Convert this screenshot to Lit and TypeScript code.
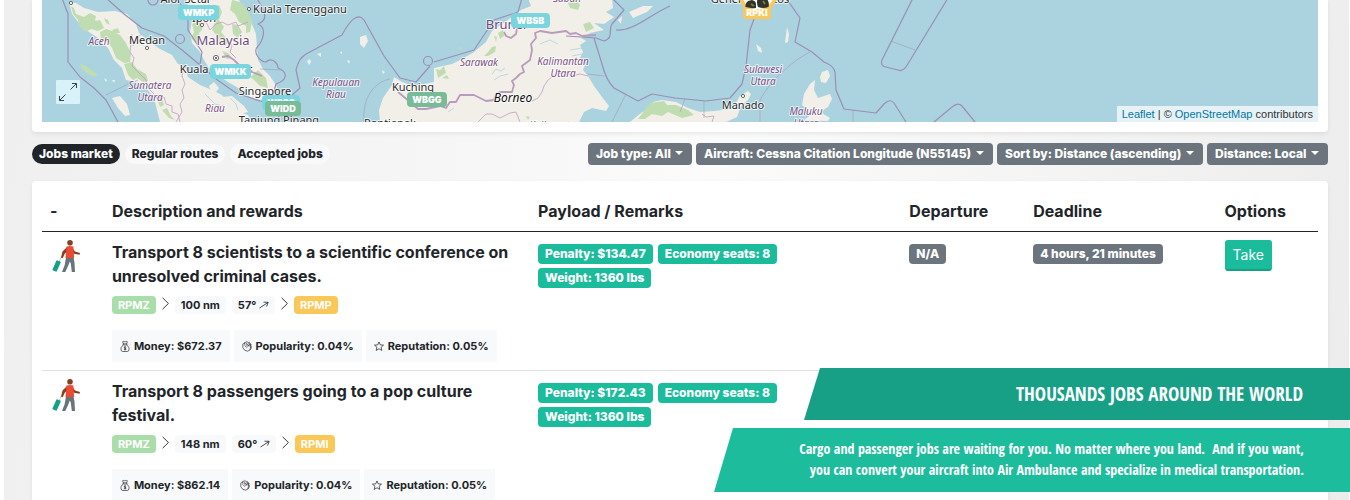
import { LitElement, html, css, svg, nothing } from "lit";
import { customElement, property } from "lit/decorators.js";

interface Job {
  title: string;
  from: string;
  distance: string;
  heading: string;
  to: string;
  money: string;
  popularity: string;
  reputation: string;
  payload: string[];
  departure?: string;
  deadline?: string;
}

const JOBS: Job[] = [
  {
    title: "Transport 8 scientists to a scientific conference on unresolved criminal cases.",
    from: "RPMZ", distance: "100 nm", heading: "57°", to: "RPMP",
    money: "$672.37", popularity: "0.04%", reputation: "0.05%",
    payload: ["Penalty: $134.47", "Economy seats: 8", "Weight: 1360 lbs"],
    departure: "N/A", deadline: "4 hours, 21 minutes",
  },
  {
    title: "Transport 8 passengers going to a pop culture festival.",
    from: "RPMZ", distance: "148 nm", heading: "60°", to: "RPMI",
    money: "$862.14", popularity: "0.04%", reputation: "0.05%",
    payload: ["Penalty: $172.43", "Economy seats: 8", "Weight: 1360 lbs"],
  },
];

const FILTERS = [
  { name: "Job type", value: "All" },
  { name: "Aircraft", value: "Cessna Citation Longitude (N55145)" },
  { name: "Sort by", value: "Distance (ascending)" },
  { name: "Distance", value: "Local" },
];

const TABS = ["Jobs market", "Regular routes", "Accepted jobs"];

const LAND = [
  "M69 2L72 14 78 22 86 30 98 38 108 48 114 60 122 68 126 80 137 82 147 89 154 98 157 110 160 122H252L248 115 240 112 230 106 222 95 212 90 200 85 188 77 185 67 178 64 172 55 160 49 150 42 139 33 136 24 127 14 115 11 98 12 84 8 76 3Z",
  "M186 -2L189 10 192 20 190 32 192 43 200 52 204 60 209 68 218 75 228 82 240 89 250 97 260 100 274 96 277 87 270 76 263 69 258 60 257 48 256 34 251 22 244 10 238 -2Z",
  "M380 122L379 110 383 98 392 85 394 77 402 82 414 86 424 84 434 82 434 68 452 64 464 58 474 52 486 42 492 31 502 24 512 17 521 10 531 6 528 -2 612 -2 613 8 606 12 614 17 604 24 594 23 604 30 590 33 581 38 586 41 580 45 583 52 580 58 585 65 583 70 588 76 594 86 602 97 609 106 606 111 592 108 584 112 579 122Z",
  "M630 122L641 113 650 108 653 102 662 100 676 102 688 108 700 112 714 111 732 109 737 101 740 96 748 91 751 94 748 100 741 106 737 117 726 122Z",
  "M802 105L804 94 810 84 815 80 814 90 818 98 830 94 832 99 828 107 820 112 830 118 828 121 804 120 812 114Z",
  "M820 77L822 72 828 70 830 76 826 83 821 82Z",
  "M112 98L120 96 127 104 130 115 125 116 118 108Z",
  "M209 86L214 82 219 88 216 92 211 91Z",
  "M222 97L232 96 244 106 248 112 240 114 230 106Z",
  "M360 37L366 35 368 41 364 48 360 44Z",
  "M787 27L789 34 788 42 785 43 786 35Z",
  "M756 44L761 48 762 53 758 51Z",
];

const FOREST = [
  "M71 6L74 8 76 14 84 17 90 13 96 16 95 21 100 20 104 28 98 31 91 29 86 32 79 26 78 20 73 14Z",
  "M100 32L106 29 112 31 120 35 126 43 131 54 130 62 124 63 116 58 112 48 108 42 101 40Z",
  "M124 64L132 62 137 69 146 74 148 81 143 82 137 78 133 80 128 75Z",
  "M112 30L118 28 120 33 114 33ZM104 18l4 2 2 5-4-2z",
  "M192 24L198 20 203 24 202 30 199 33 200 39 196 43 191 38 194 32Z",
  "M214 8L219 5 222 12 219 20 224 27 221 32 228 40 226 46 220 45 217 36 212 30 215 22Z",
  "M232 0L240 2 246 8 250 16 252 22 250 32 246 33 246 26 239 22 235 14 230 10Z",
  "M232 24L238 25 242 32 238 38 233 34ZM222 51l6 2 4 5-5 1z",
  "M246 74L252 76 258 70 266 78 268 88 260 86 254 80Z",
  "M156 96L162 98 164 105 160 107ZM162 110l5-2 4 8 4 4-6-2z",
  "M436 69L440 70 444 66 446 73 438 78ZM442 78l5-3 2 4z",
  "M484 56L488 52 492 47 496 46 495 52 488 56Z",
  "M498 33l5-3 1 6-4 3z M494 36l3 1-1 5z",
  "M568 3L576 0 580 5 578 10 570 8Z",
  "M583 24L590 22 594 28 586 32Z",
  "M650 103L664 101 667 105 676 105 688 110 694 115 682 118 668 112 662 116 652 114 645 119 638 119Z",
  "M526 116l4 1-2 3zM458 47l4 1-2 2z",
  "M80 64L86 66 97 74 96 77 88 74 82 69Z",
];

const BORDERS = [
  "M62 -2L68 14V62L80 77 94 88 106 100 118 122",
  "M106 -2L124 14 142 28 164 36 182 50 200 65 216 79 236 93 260 101 276 104 288 116 306 122",
  "M176 -2L188 14V30L202 52 200 64",
  "M258 0C266 14 268 20 258 24C268 28 262 42 258 46C252 52 260 62 266 62C272 56 278 64 278 68C288 72 288 80 276 84L272 98",
  "M278 120L282 104 300 88 296 70C298 62 300 58 306 54L342 35C350 20 358 12 364 20L384 56 400 78 416 82 430 66",
  "M434 62L474 50 494 20 518 12 522 -2",
  "M612 -2L624 10 612 24C608 30 614 38 604 41L596 38 566 36",
  "M594 38L602 64Q606 80 614 88L638 101 652 94 675 98 706 101 730 98 742 84 746 66 750 30 758 8 764 -2",
  "M616 30C632 32 648 16 670 6",
  "M786 -2L800 18 795 42 812 52 824 62Q834 66 835 72L836 90 844 109 876 113 884 104Q890 98 894 103L906 122",
  "M913 -2L882 60Q880 66 886 67L898 70Q902 72 906 67L948 -2",
  "M934 122L952 107Q958 102 962 106L975 122",
];

const THIN = [
  "M106 95L128 84 138 80",
  "M364 122C362 98 374 82 390 79",
  "M604 76L588 74",
  "M626 94L612 122",
  "M891 41L915 50",
  "M810 52C790 62 768 84 760 100V122",
  "M853 110V122 M704 101V118 M685 99L680 112",
  "M260 69L282 70",
];

const INNER = [
  "M132 34L130 52 134 58 132 66 140 74 146 80 148 88 154 94 156 98 164 97 166 104 172 106 172 112 178 114 180 122",
  "M176 122L182 112 180 104 184 98 182 90 185 84 182 76 184 66",
  "M202 24L206 22 210 30 216 24 222 22 228 25 236 22 238 26 248 22",
  "M478 122L486 114 492 114 500 118 510 113 516 112 520 122",
  "M532 101L538 98 542 92 544 86 548 80 556 74 566 72 572 76 580 74 588 76",
  "M702 114L706 117 714 116 712 122",
  "M228 40L232 46 230 52 236 58 M142 34l-6 4-3 8",
];

const COUNTRY = [
  "M398 92L410 102 418 109 426 109 440 106 446 108 450 102 456 102 460 95 474 95 486 101 494 100 496 94 500 92 512 92 514 85 512 81 516 78 520 74 524 72 522 66 530 60 532 50 531 44 536 38 535 33 540 31 552 33 566 31 570 34 576 33 582 36 596 35",
  "M504 32L506 36 511 38 516 34 517 28",
  "M222 57L228 56 234 60 240 66 246 66 252 72 262 76",
];

@customElement("world-map")
class WorldMap extends LitElement {
  static styles = css`
    :host { display: block; position: relative; overflow: hidden; background: #aad3df; }
    .terrain { display: block; width: 100%; height: 122px; }
    .land { fill: #f2efe9; }
    .forest { fill: #c0ddb2; }
    .border { fill: none; stroke: #9b8fb4; stroke-width: 1.2; stroke-linejoin: round; }
    .thin { fill: none; stroke: #9f9bb8; stroke-width: 0.6; }
    .inner { fill: none; stroke: #bfa0c2; stroke-width: 0.8; stroke-linejoin: round; }
    .country { fill: none; stroke: #b79cbc; stroke-width: 1.8; stroke-linejoin: round; }
    .river { fill: none; stroke: #aad3df; stroke-width: 0.8; }
    .dot { fill: #fff; stroke: #444; stroke-width: 0.8; }
    text { font-family: "Noto Sans", sans-serif; paint-order: stroke; stroke: rgba(255, 255, 255, 0.7); stroke-width: 2px; stroke-linejoin: round; text-anchor: middle; }
    .city { font-size: 11px; fill: #2b2b2b; }
    .nation { font-size: 13px; fill: #6f4a78; }
    .region { font-size: 10px; font-style: italic; fill: #7a5284; }
    .island { font-size: 12px; font-style: italic; fill: #111; }
    .code { font-family: Inter, sans-serif; font-size: 9px; font-weight: 900; fill: #fff; stroke: none; }
    .fullscreen { position: absolute; left: 14px; bottom: 18px; width: 24px; height: 24px; padding: 0; border: 0; border-radius: 1px; background: rgba(224, 247, 255, 0.85); cursor: pointer; }
    .fullscreen svg { display: block; }
    .credit { position: absolute; right: 0; bottom: 0; padding: 0 5px; font: 11px/16px "Liberation Sans", Arial, sans-serif; color: #333; background: rgba(255, 255, 255, 0.7); }
    .credit a { color: #0078a8; text-decoration: none; }
  `;

  private label(kind: string, x: number, y: number, text: string) {
    return svg`<text class=${kind} x=${x} y=${y}>${text}</text>`;
  }

  private pin(x: number, y: number, w: number, fill: string, text: string) {
    return svg`<rect x=${x} y=${y} width=${w} height="15" rx="4" fill=${fill} /><text class="code" x=${x + w / 2} y=${y + 11}>${text}</text>`;
  }

  render() {
    return html`
      <svg class="terrain" viewBox="42 0 1276 122" preserveAspectRatio="xMinYMin slice" role="img" aria-label="Map of airports in South-East Asia">
        ${LAND.map((d) => svg`<path class="land" d=${d} />`)}
        ${FOREST.map((d) => svg`<path class="forest" d=${d} />`)}
        <path class="land" d="M104 78l3 2-1 2zM112 80l3 0-1 3zM307 61l3-2 1 3-2 3zM317 54l4-1 0 4zM340 53l2-2 0 3zM347 60l3 1-1 3zM382 70l3 2-2 2zM629 12l14-6 10 0-6 6-14 6zM618 20l4-4-1 8z" />
        <path class="river" d="M492 74l4-5 5 2 4-3M494 80l6-4 8-2M448 112l6-4M230 98l6 6 2 6M540 44l10-4 8 4M205 94l10 10 8 2M570 50l12-2M572 56l10-2M586 36l6-2" />
        ${BORDERS.map((d) => svg`<path class="border" d=${d} />`)}
        ${THIN.map((d) => svg`<path class="thin" d=${d} />`)}
        ${INNER.map((d) => svg`<path class="inner" d=${d} />`)}
        ${COUNTRY.map((d) => svg`<path class="country" d=${d} />`)}
        <circle class="border" cx="180" cy="39" r="4.500" />
        <circle class="border" cx="153" cy="0" r="5" />
        <circle class="border" cx="428" cy="61" r="4.500" />
        <circle class="dot" cx="71" cy="3" r="1.600" />
        <circle class="dot" cx="147" cy="48" r="1.600" />
        <circle class="dot" cx="202" cy="25" r="1.600" />
        <circle class="dot" cx="249" cy="9" r="1.600" />
        <circle class="dot" cx="216" cy="58" r="2.600" />
        <circle cx="216" cy="58" r="1" fill="#444" />
        <circle class="dot" cx="743" cy="96" r="1.600" />
        ${this.label("city", 186, 3, "Alor Setar")}
        ${this.label("city", 300, 13, "Kuala Terengganu")}
        ${this.label("city", 204, 22, "Ipoh")}
        ${this.label("city", 147, 44, "Medan")}
        ${this.label("nation", 223, 45, "Malaysia")}
        ${this.label("city", 216, 73, "Kuala Lumpur")}
        ${this.label("city", 265, 95, "Singapore")}
        ${this.label("city", 279, 124, "Tanjung Pinang")}
        ${this.label("region", 99, 45, "Aceh")}
        ${this.label("region", 150, 89, "Sumatera")}
        ${this.label("region", 150, 101, "Utara")}
        ${this.label("region", 215, 112, "Riau")}
        ${this.label("region", 336, 86, "Kepulauan")}
        ${this.label("region", 336, 98, "Riau")}
        ${this.label("city", 413, 91, "Kuching")}
        ${this.label("city", 390, 127, "Pontianak")}
        ${this.label("region", 479, 66, "Sarawak")}
        ${this.label("nation", 506, 29, "Brunei")}
        ${this.label("region", 567, 2, "Sabah")}
        ${this.label("region", 563, 65, "Kalimantan")}
        ${this.label("region", 563, 77, "Utara")}
        ${this.label("island", 513, 102, "Borneo")}
        ${this.label("region", 555, 129, "Kalimantan")}
        ${this.label("city", 750, 3, "General Santos")}
        ${this.label("region", 763, 73, "Sulawesi")}
        ${this.label("region", 763, 85, "Utara")}
        ${this.label("city", 743, 109, "Manado")}
        ${this.label("region", 806, 115, "Maluku")}
        ${this.label("region", 806, 127, "Utara")}
        ${this.pin(178, 5, 41, "#7bd5df", "WMKP")}
        ${this.pin(210, 64, 41, "#7bd5df", "WMKK")}
        ${this.pin(262, 95, 38, "#7bd5df", "WSSS")}
        ${this.pin(265, 101, 36, "#77bb97", "WIDD")}
        ${this.pin(407, 92, 40, "#77bb97", "WBGG")}
        ${this.pin(511, 13, 39, "#7bd5df", "WBSB")}
        <circle cx="758" cy="-7" r="18" fill="#fff" stroke="#fac858" stroke-width="3.500" />
        <path d="M745.500 7q-.5-4 2.500-6l4-1q4 1 4 4v4q-5 .6-10.500-1zM758 7q-2-5 0-9h8q4 4 2.500 9-5 2-10.500 0z" fill="#30332e" />
        <path d="M751 4l3 2M763 1l2 3" stroke="#71851f" stroke-width="2" />
        <path d="M743 7q14 4 28 0v9q0 3-3 3h-22q-3 0-3-3z" fill="#fac858" />
        <text class="code" x="757" y="16">RPKI</text>
      </svg>
      <button class="fullscreen" aria-label="Toggle full screen">
        <svg viewBox="0 0 24 24" width="24" height="24" fill="none" stroke="#3c444b" stroke-width="1">
          <path d="M14.500 9.500L20.500 3.500M16 3.500h4.500V8M9.500 14.500L3.500 20.500M3.500 16v4.500H8" />
        </svg>
      </button>
      <div class="credit"><a href="#leaflet">Leaflet</a> | © <a href="#osm">OpenStreetMap</a> contributors</div>
    `;
  }
}

const traveller = html`<svg class="traveller" viewBox="0 0 28 32" width="28" height="32" aria-hidden="true">
  <path d="M9.500 16.500L7 22" stroke="#b9c6c8" stroke-width="1" />
  <path d="M14 17.500h7.500l1 5L23 32h-3.200l-1-8.500-1-2-1.300 3.500L13.300 32H10l2.700-7z" fill="#67757b" />
  <path d="M15 7L10.500 11.500 9 17.600l1.700.6 2-4.400 3-2.800zM20.500 8l2.500 3.500 5 1.500-.4 1.700-5.600-.9-2.500-3z" fill="#86411f" />
  <path d="M14.600 6.600q3.500-1.200 6.800 0l.7 11.400h-8.600l.6-7z" fill="#eb4b35" />
  <circle cx="18" cy="2.800" r="2.800" fill="#86411f" />
  <rect x="2.200" y="20.500" width="4.800" height="11" rx="1" transform="rotate(24 4.600 26)" fill="#16a085" />
</svg>`;

const chevron = html`<svg class="chevron" viewBox="0 0 7 13" width="7" height="13" fill="none" stroke="#212529" stroke-width=".9" aria-hidden="true"><path d="M.6.800L6.400 6.500.6 12.200" /></svg>`;

const arrow = html`<svg viewBox="0 0 10 8" width="10" height="8" fill="none" stroke="#212529" stroke-width=".8" aria-hidden="true"><path d="M.5 7L9 1.500M4.500 1.200L9.200 1.300 7.600 5.500" /></svg>`;

const moneyIcon = html`<svg viewBox="0 0 12 14" width="10" height="13" fill="none" stroke="#212529" stroke-width=".8" aria-hidden="true">
  <path d="M4 3.800L3.200 1.200Q4.400.6 5.200 1.200 6 .4 6.800 1.200 7.800.6 8.800 1.200L8 3.800M3.800 3.800h4.400v1.400H3.800zM4 5.200C1.500 7 .8 9 1.300 11.200Q1.600 13 3.400 13h5.200q1.800 0 2.100-1.800C11.200 9 10.500 7 8 5.200M7.400 8Q6 7 5 7.900q-.4 1 1 1.300 1.600.3 1.300 1.300-1.200 1-2.600 0M6 6.600v5" />
</svg>`;

const clapIcon = html`<svg viewBox="0 0 12 14" width="10" height="13" fill="none" stroke="#212529" stroke-width=".8" aria-hidden="true">
  <path d="M1 8.500V4l1-.6 1 .8V2.200l1-.6 4.500 5V4.500q1-1 1.600 0v4.200Q10 12.500 6.400 12.600 3 12.600 1 8.500zM3 5.500l3 3M4 3.500L7.500 7.500M5 1.500l.8-.6L11 6q.8 3-1 5M7.800 2.500l.8-.6L11.200 5" />
</svg>`;

const starIcon = html`<svg viewBox="0 0 11 13" width="10" height="13" fill="none" stroke="#212529" stroke-width=".8" stroke-linejoin="round" aria-hidden="true">
  <path d="M5.500 1.500L6.900 4.700 10.500 5 7.800 7.300 8.600 10.800 5.500 9 2.400 10.800 3.200 7.300.5 5 4.100 4.700z" />
</svg>`;

@customElement("job-board")
class JobBoard extends LitElement {
  @property({ attribute: false }) jobs: Job[] = [];

  static styles = css`
    :host { display: block; padding: 10px; background: #fff; border-radius: 4px; box-shadow: 0 2px 4px rgba(0, 0, 0, 0.075); }
    .jobs { width: 100%; table-layout: fixed; border-collapse: separate; border-spacing: 0; font-size: 16px; line-height: 24px; }
    .c-icon { width: 4.85%; }
    .c-title { width: 33.4%; }
    .c-payload { width: 29.1%; }
    .c-departure { width: 9.7%; }
    .c-deadline { width: 15%; }
    th { padding: 8px; text-align: left; font-weight: 700; border-bottom: 1px solid #212529; }
    td { padding: 8px; vertical-align: top; border-bottom: 1px solid #dee2e6; }
    .title { margin: 0 0 8px; font-size: 16px; line-height: 24px; font-weight: 700; }
    .traveller { display: block; margin-left: 2px; }
    .route { display: flex; align-items: center; gap: 6px; margin-bottom: 16px; font-size: 11px; line-height: 18px; font-weight: 700; }
    .stop, .leg { padding: 0 6px; border-radius: 4px; }
    .stop { color: #fff; }
    .from { background: #a9dda9; }
    .to { background: #fac858; }
    .leg { background: #f8f9fa; }
    .chevron { margin-bottom: 4px; }
    .rewards { display: flex; gap: 4px; font-size: 11px; line-height: 32px; font-weight: 700; }
    .reward { display: flex; align-items: center; gap: 4px; padding: 0 8px; background: #f8f9fa; white-space: nowrap; }
    .tags { display: flex; flex-wrap: wrap; gap: 4px 5px; padding-top: 4px; }
    .payload { padding-right: 8px; }
    .tag { padding: 0 7px; border-radius: 4px; font-size: 12px; line-height: 20px; font-weight: 800; color: #fff; background: #1abc9c; white-space: nowrap; }
    .muted { background: #6c757d; }
    .take { display: block; padding: 3px 7px 4px; border: 1px solid #1abc9c; border-bottom: 2px solid #16a085; border-radius: 3px; font: 14px/21px Inter, sans-serif; color: #fff; background: #1abc9c; cursor: pointer; }
  `;

  private badge(text?: string) {
    return text ? html`<div class="tags"><span class="tag muted">${text}</span></div>` : nothing;
  }

  render() {
    return html`
      <table class="jobs">
        <colgroup><col class="c-icon" /><col class="c-title" /><col class="c-payload" /><col class="c-departure" /><col class="c-deadline" /><col /></colgroup>
        <thead>
          <tr><th>-</th><th>Description and rewards</th><th>Payload / Remarks</th><th>Departure</th><th>Deadline</th><th>Options</th></tr>
        </thead>
        <tbody>
          ${this.jobs.map((job) => html`
            <tr>
              <td>${traveller}</td>
              <td>
                <h3 class="title">${job.title}</h3>
                <div class="route">
                  <span class="stop from">${job.from}</span>${chevron}
                  <span class="leg">${job.distance}</span>
                  <span class="leg">${job.heading} ${arrow}</span>${chevron}
                  <span class="stop to">${job.to}</span>
                </div>
                <div class="rewards">
                  <span class="reward">${moneyIcon}<span>Money: ${job.money}</span></span>
                  <span class="reward">${clapIcon}<span>Popularity: ${job.popularity}</span></span>
                  <span class="reward">${starIcon}<span>Reputation: ${job.reputation}</span></span>
                </div>
              </td>
              <td><div class="tags payload">${job.payload.map((item) => html`<span class="tag">${item}</span>`)}</div></td>
              <td>${this.badge(job.departure)}</td>
              <td>${this.badge(job.deadline)}</td>
              <td>${job.deadline ? html`<button class="take">Take</button>` : nothing}</td>
            </tr>`)}
        </tbody>
      </table>
    `;
  }
}

@customElement("app-root")
class AppRoot extends LitElement {
  static styles = css`
    :host { display: block; box-sizing: border-box; height: 100vh; overflow: hidden; padding: 0 1px 0 4px; background: #fff; color: #212529; font-family: Inter, sans-serif; }
    .page { min-height: 100%; padding: 0 21px 0 28px; background: linear-gradient(100deg, #efefef, #f4f4f4 25%, #fbfbfb 50%, #f4f4f4 75%, #ececec); }
    .map-card { padding: 0 10px 10px; background: #fff; border-radius: 0 0 4px 4px; box-shadow: 0 2px 4px rgba(0, 0, 0, 0.075); }
    .toolbar { display: flex; justify-content: space-between; align-items: center; flex-wrap: wrap; gap: 8px; padding: 11px 0 16px; }
    .tabs { display: flex; gap: 5px; }
    .filters { display: flex; flex-wrap: wrap; gap: 4px; }
    .tab { padding: 0 7px; border-radius: 10px; font-size: 12px; line-height: 20px; font-weight: 800; color: #212529; background: #f8f9fa; text-decoration: none; }
    .active { color: #fff; background: #212529; }
    .filter { position: relative; display: flex; }
    .filter::after { content: ""; position: absolute; right: 9px; top: 8px; border: 4px solid transparent; border-top-color: #fff; border-bottom: 0; pointer-events: none; }
    .filter select { appearance: none; height: 22px; margin: 0; padding: 0 21px 0 8px; border: 0; border-radius: 4px; font: 800 12px/22px Inter, sans-serif; color: #fff; background: #6c757d; }
    .promo { position: fixed; right: 0; bottom: 8px; width: 636px; display: flex; flex-direction: column; align-items: flex-end; gap: 8px; color: #fff; font-family: "Liberation Sans Narrow", "Open Sans Condensed", "Roboto Condensed", sans-serif; text-align: right; }
    .headline { box-sizing: border-box; width: 546px; margin: 0; padding-right: 47px; font-size: 19px; line-height: 52px; font-weight: 400; background: #18a086; clip-path: polygon(16px 0, 100% 0, 100% 100%, 0 100%); }
    .pitch { box-sizing: border-box; width: 100%; margin: 0; padding: 10px 46px 12px 0; font-size: 14px; line-height: 21px; background: #1cbc9c; clip-path: polygon(19px 0, 100% 0, 100% 100%, 0 100%); }
  `;

  render() {
    return html`
      <div class="page">
        <section class="map-card"><world-map></world-map></section>
        <div class="toolbar">
          <nav class="tabs">
            ${TABS.map((tab, i) => html`<a class="tab ${i === 0 ? "active" : ""}" href="#${i}">${tab}</a>`)}
          </nav>
          <div class="filters">
            ${FILTERS.map((f) => html`<label class="filter"><select aria-label=${f.name}><option>${f.name}: ${f.value}</option></select></label>`)}
          </div>
        </div>
        <job-board .jobs=${JOBS}></job-board>
      </div>
      <aside class="promo">
        <h2 class="headline">THOUSANDS JOBS AROUND THE WORLD</h2>
        <p class="pitch">Cargo and passenger jobs are waiting for you. No matter where you land. &nbsp;And if you want,<br />you can convert your aircraft into Air Ambulance and specialize in medical transportation.</p>
      </aside>
    `;
  }
}
